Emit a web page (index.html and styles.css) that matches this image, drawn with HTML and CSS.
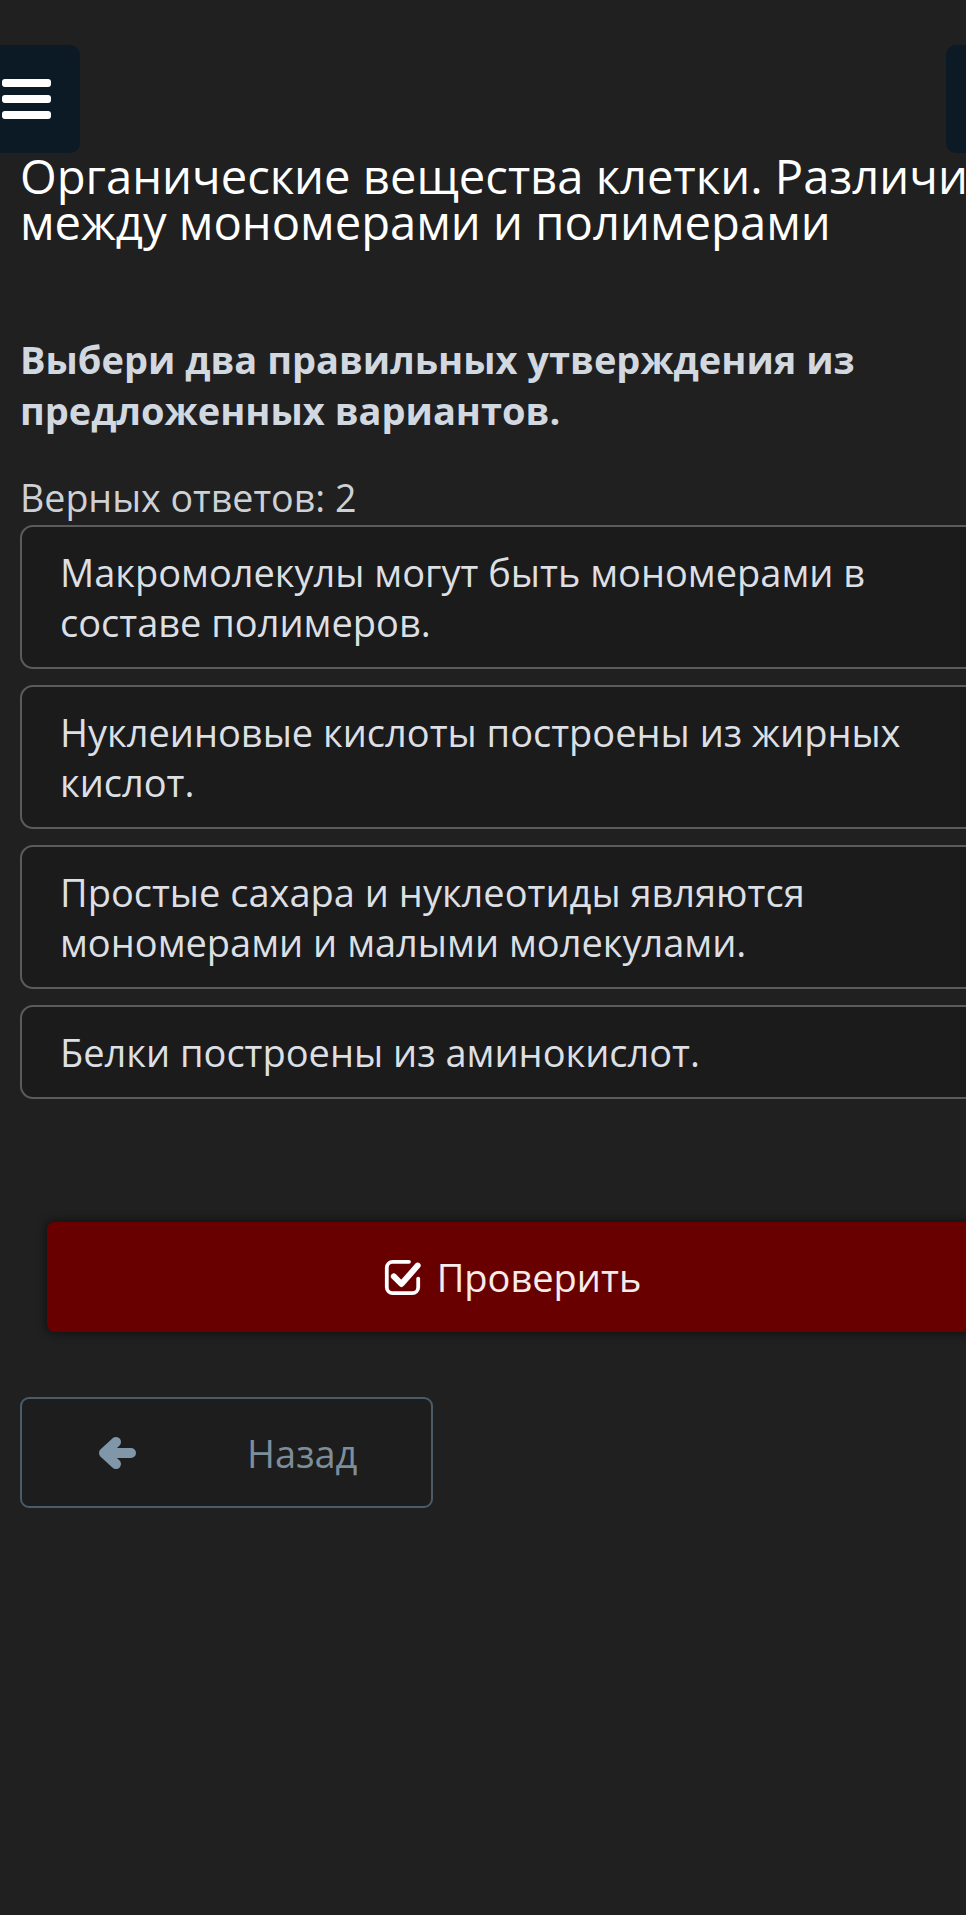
FILE: index.html
```html
<!DOCTYPE html>
<html lang="ru">
<head>
  <meta charset="UTF-8">
  <meta name="viewport" content="width=device-width, initial-scale=1.0">
  <title>Органические вещества клетки</title>
  <link rel="stylesheet" href="styles.css">
</head>
<body>
  <header class="topbar">
    <button class="menu-btn" aria-label="Меню">
      <span></span>
      <span></span>
      <span></span>
    </button>
    <button class="side-btn" aria-label="Ещё"></button>
  </header>

  <main class="content">
    <h1 class="title">Органические вещества клетки. Различия между мономерами и полимерами</h1>

    <p class="question">Выбери два правильных утверждения из предложенных вариантов.</p>

    <p class="answers-count">Верных ответов: 2</p>

    <div class="options">
      <div class="option">Макромолекулы могут быть мономерами в составе полимеров.</div>
      <div class="option">Нуклеиновые кислоты построены из жирных кислот.</div>
      <div class="option">Простые сахара и нуклеотиды являются мономерами и малыми молекулами.</div>
      <div class="option">Белки построены из аминокислот.</div>
    </div>

    <button class="check-btn">
      <svg class="check-icon" viewBox="0 0 36 36" width="39" height="39">
        <path d="M24 3.5H9A5.5 5.5 0 0 0 3.5 9v18A5.5 5.5 0 0 0 9 32.5h18a5.5 5.5 0 0 0 5.5-5.5v-8" fill="none" stroke="#fff" stroke-width="3.5" stroke-linecap="round"/>
        <path d="M10 17l7 7L32 7" fill="none" stroke="#fff" stroke-width="5.5" stroke-linecap="round" stroke-linejoin="round"/>
      </svg>
      Проверить
    </button>

    <button class="back-btn">
      <svg class="back-icon" viewBox="0 0 38 32" width="38" height="32">
        <path d="M18 5L6 16l12 11M7 16h26" fill="none" stroke="#7f97a8" stroke-width="10" stroke-linecap="round" stroke-linejoin="round"/>
      </svg>
      <span>Назад</span>
    </button>
  </main>
</body>
</html>
```

FILE: styles.css
```css
html, body {
  overflow-x: hidden;
}
body {
  margin: 0;
  padding: 0;
  background-color: #202020;
  color: #fff;
  font-family: "Open Sans", "Noto Sans", sans-serif;
}
.topbar {
  display: flex;
  justify-content: space-between;
  padding-top: 45px;
}
.menu-btn {
  width: 101px;
  height: 108px;
  margin-left: -21px;
  padding: 0 0 0 23px;
  border: none;
  border-radius: 10px;
  background-color: #0b1a25;
  display: flex;
  flex-direction: column;
  justify-content: center;
  gap: 8px;
}
.menu-btn span {
  display: block;
  width: 49px;
  height: 8px;
  border-radius: 3px;
  background-color: #fff;
}
.side-btn {
  width: 100px;
  height: 108px;
  margin-right: -80px;
  border: none;
  border-radius: 10px;
  background-color: #0b1a25;
}
.content {
  width: 984px;
  padding: 0 0 0 20px;
}
.title {
  margin: 0;
  font-size: 47.2px;
  font-weight: 400;
  line-height: 46px;
  color: #fff;
  width: 1000px;
}
.question {
  margin: 89px 0 0;
  font-size: 38px;
  font-weight: 700;
  line-height: 51px;
  color: #d2d8e0;
}
.answers-count {
  margin: 37px 0 0;
  font-size: 37.6px;
  line-height: 50px;
  color: #cdd1d6;
}
.options {
  display: flex;
  flex-direction: column;
  gap: 16px;
  margin-top: 2px;
}
.option {
  border: 2px solid #5b5b5b;
  border-radius: 13px;
  background-color: #1b1b1b;
  padding: 20px 40px 20px 38px;
  font-size: 38px;
  line-height: 50px;
  color: #dcdfe3;
}
.check-btn {
  display: flex;
  align-items: center;
  justify-content: center;
  gap: 15px;
  width: 930px;
  height: 110px;
  margin: 123px 0 0 27px;
  border: none;
  border-radius: 8px;
  background-color: #690000;
  box-shadow: 0 0 8px 2px rgba(0, 0, 0, 0.45);
  font-family: inherit;
  font-size: 38px;
  color: #f7ecec;
}
.back-btn {
  display: flex;
  align-items: center;
  width: 413px;
  height: 111px;
  margin-top: 65px;
  padding: 0 0 0 76px;
  border: 2px solid #4b5b67;
  border-radius: 9px;
  background-color: #1d1d1d;
  font-family: inherit;
  font-size: 38px;
  color: #7d8e9b;
}
.back-icon {
  margin-right: 111px;
}
```
